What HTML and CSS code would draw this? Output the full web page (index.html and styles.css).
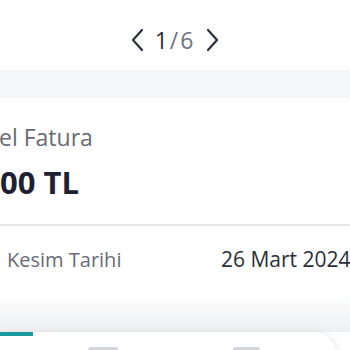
FILE: index.html
```html
<!DOCTYPE html>
<html>
<head>
<meta charset="utf-8">
<link rel="stylesheet" href="styles.css">
</head>
<body>
<header class="pager">
  <svg class="chev" width="16" height="24" viewBox="0 0 16 24"><path d="M13 2 L4 12 L13 22" fill="none" stroke="#2b2f3a" stroke-width="2.2" stroke-linecap="round" stroke-linejoin="round"/></svg>
  <span class="count"><span class="cur">1</span><span class="tot">/6</span></span>
  <svg class="chev" width="16" height="24" viewBox="0 0 16 24"><path d="M3 2 L12 12 L3 22" fill="none" stroke="#2b2f3a" stroke-width="2.2" stroke-linecap="round" stroke-linejoin="round"/></svg>
</header>
<div class="band"></div>
<section class="card">
  <div class="label">el Fatura</div>
  <div class="amount">00 TL</div>
  <div class="sep"></div>
  <div class="row">
    <span class="key">Kesim Tarihi</span>
    <span class="val">26 Mart 2024</span>
  </div>
</section>
<div class="fade"></div>
<section class="bottom">
  <div class="tabline"></div>
  <div class="icons">
    <span class="ic ic1"></span>
    <span class="ic ic2"></span>
  </div>
</section>
</body>
</html>
```
FILE: styles.css
```css
html, body { margin: 0; padding: 0; }
body {
  width: 350px; height: 350px; overflow: hidden; background: #fff;
  font-family: "Open Sans", "Lato", sans-serif;
}
.pager {
  height: 70px; display: flex; align-items: center; justify-content: center;
  gap: 10px; padding-top: 10px; box-sizing: border-box;
}
.count { font-size: 23px; letter-spacing: 2px; line-height: 26px; }
.cur { color: #2b2f3a; }
.tot { color: #6f7480; }
.band { height: 28px; background: #f5f6f8; }
.card { padding-top: 25px; }
.label { font-size: 23px; color: #676b76; line-height: 28px; margin-left: -1px; }
.amount { font-size: 31px; font-weight: 700; color: #1d2133; margin-top: 13px; line-height: 36px; }
.sep { height: 2px; background: #e4e5e7; margin-top: 24px; }
.row {
  display: flex; width: 480px; white-space: nowrap; align-items: baseline;
  padding: 19px 0 0 7px; box-sizing: border-box; font-size: 20px; line-height: 28px;
}
.key { color: #676b76; width: 214px; }
.val { color: #2b2f3a; font-size: 21px; }
.fade { height: 38px; margin-top: 20px; background: linear-gradient(#ffffff, #eeeff1); }
.bottom {
  width: 336px; height: 40px; background: #fff; border-top-right-radius: 22px;
  box-shadow: 2px 0 6px rgba(0,0,0,0.08); position: relative;
}
.tabline { position: absolute; left: 0; top: 0; width: 33px; height: 4px; background: #1a9aa0; }
.icons { display: flex; padding-top: 15px; }
.ic { display: block; height: 6px; background: #d4d6da; border-radius: 3px; }
.ic1 { width: 30px; margin-left: 88px; }
.ic2 { width: 27px; margin-left: 115px; }
```
